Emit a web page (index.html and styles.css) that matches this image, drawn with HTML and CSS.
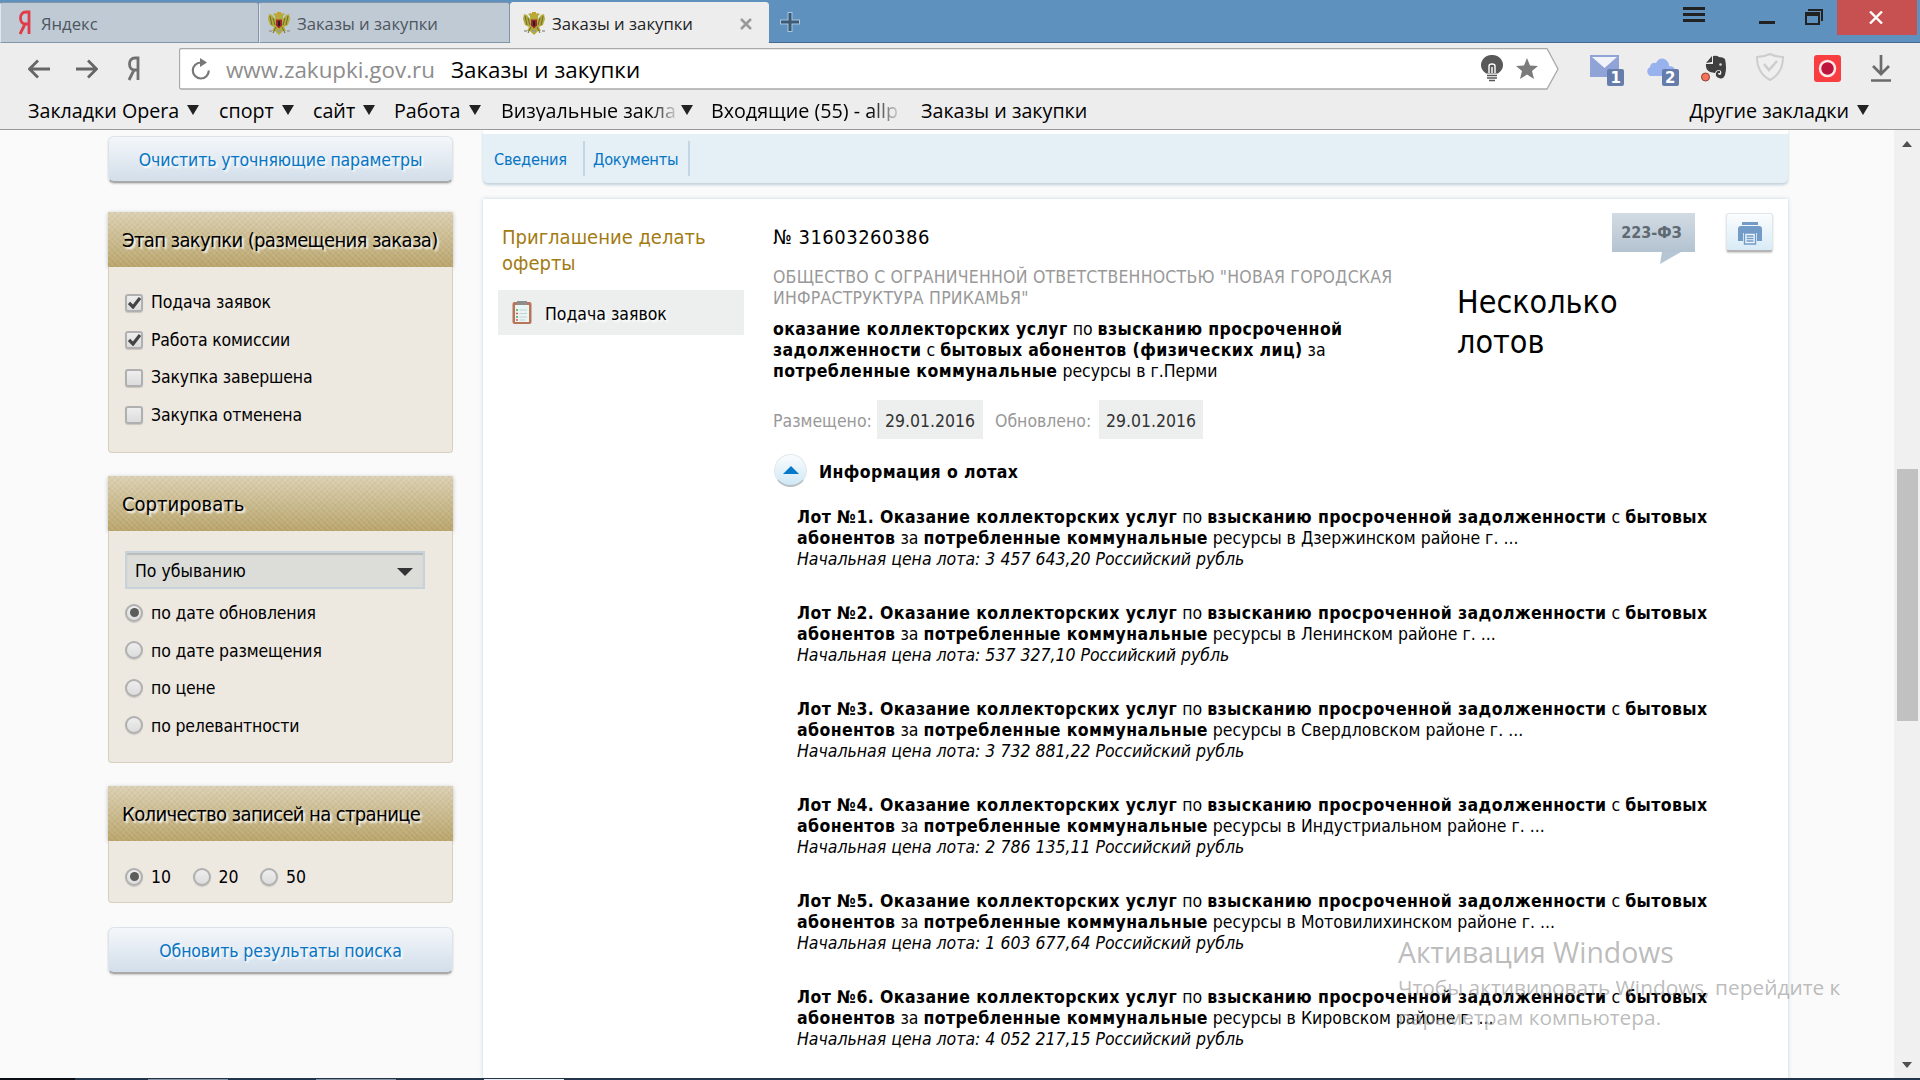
FILE: index.html
```html
<!DOCTYPE html>
<html lang="ru">
<head>
    <meta charset="UTF-8">
    <title>Заказы и закупки</title>
    <link rel="stylesheet" href="styles.css">
</head>
<body>
    <svg class="defs" width="0" height="0">
        <symbol id="eagle" viewBox="0 0 24 24">
            <path d="M11 4L9 2 6 3 8 5 8 8 5 4 2 3 1 8 3 14 7 16 5 20 8 20 11 23 12 24 13 23 16 20 19 20 17 16 21 14 23 8 22 3 19 4 16 8 16 5 18 3 15 2 13 4z" fill="#b3ac3c"/>
            <path d="M3 5l2 9M6 7l2 7M21 5l-2 9M18 7l-2 7M9 16l-3 6M15 16l3 6" stroke="#6d6a32" stroke-width="1" fill="none"/>
            <path d="M10 1h4v3h-4z" fill="#c9a02e"/>
            <path d="M9 8.500h6v6l-3 3-3-3z" fill="#a3242a"/>
            <path d="M11 10h2v5h-2z" fill="#222"/>
            <path d="M2 20h3M20 20h3M10 20h4" stroke="#999" stroke-width="1.500"/>
        </symbol>
        <symbol id="yandex" viewBox="0 0 13 25">
            <path d="M11 24V2H8C4.500 2 2.500 4.500 2.500 8s2 6 5 6H11M7 14L2 24" fill="none" stroke="currentColor" stroke-width="2.800"/>
        </symbol>
        <symbol id="badge" viewBox="0 0 34 31">
            <rect x="17" y="14" width="17" height="17" rx="2" fill="#667caa"/>
        </symbol>
    </svg>

    <div class="browser">
        <div class="tabs">
            <div class="tab tab-first">
                <svg class="ya-red" width="13" height="25"><use href="#yandex"/></svg>
                <span>Яндекс</span>
            </div>
            <div class="tab">
                <svg class="eagle" width="24" height="24"><use href="#eagle"/></svg>
                <span>Заказы и закупки</span>
            </div>
            <div class="tab active">
                <svg class="eagle" width="24" height="24"><use href="#eagle"/></svg>
                <span>Заказы и закупки</span>
                <svg class="tab-close" width="12" height="12" viewBox="0 0 12 12"><path d="M1 1l10 10M11 1L1 11" stroke="#999" stroke-width="2.500"/></svg>
            </div>
            <svg class="new-tab" width="22" height="22" viewBox="0 0 22 22"><path d="M11 1v20M1 11h20" stroke="#a9c6df" stroke-width="5"/><path d="M11 2v18M2 11h18" stroke="#3d5a75" stroke-width="3"/></svg>
            <div class="window-buttons">
                <svg class="burger" width="22" height="16" viewBox="0 0 22 16"><path d="M0 1.500h22M0 7.500h22M0 13.500h22" stroke="#222" stroke-width="3"/></svg>
                <svg class="minimize" width="16" height="3"><rect width="16" height="3" fill="#222"/></svg>
                <svg class="restore" width="18" height="16" viewBox="0 0 18 16"><path d="M3 1h14v11" fill="none" stroke="#222" stroke-width="2"/><path d="M1 5h13v10H1z" fill="none" stroke="#222" stroke-width="2"/><path d="M0 3h15v4H0z" fill="#222"/></svg>
                <div class="close">
                    <svg width="14" height="13" viewBox="0 0 14 13"><path d="M1 .5l12 12M13 .5l-12 12" stroke="#fff" stroke-width="2.400"/></svg>
                </div>
            </div>
        </div>

        <div class="toolbar">
            <svg class="arrow-back" width="22" height="20" viewBox="0 0 22 20"><path d="M22 10H2M10 1.500L1.500 10 10 18.500" fill="none" stroke="#666" stroke-width="2.800"/></svg>
            <svg class="arrow-next" width="22" height="20" viewBox="0 0 22 20"><path d="M0 10h20M12 1.500L20.500 10 12 18.500" fill="none" stroke="#666" stroke-width="2.800"/></svg>
            <svg class="ya-gray" width="13" height="25"><use href="#yandex"/></svg>
            <div class="address">
                <svg class="address-shape" width="1380" height="42" viewBox="0 0 1380 42"><path d="M2.500.5H1368L1379 21 1368 41H2.500Q.5 41 .5 39V2.500Q.5.5 2.500.5z" fill="#fff" stroke="#a9a9a9" stroke-width="1.300"/></svg>
                <svg class="reload" width="20" height="22" viewBox="0 0 20 22"><path d="M10 4.500A8 8 0 1 0 17.800 12.500" fill="none" stroke="#777" stroke-width="2.200"/><path d="M9 0l7 4.500L9 9z" fill="#777"/></svg>
                <span class="url">www.zakupki.gov.ru</span>
                <span class="page-name">Заказы и закупки</span>
                <svg class="bulb" width="22" height="27" viewBox="0 0 22 27"><path d="M11 0a10.500 10 0 0 0-6 18.500h12A10.500 10 0 0 0 11 0z" fill="#585858"/><path d="M8 18v-7q0-2 3-2t3 2v7M11 12v6" fill="none" stroke="#fff" stroke-width="1.400"/><path d="M6 20.500h10M6 23h10M8 25.500h6" stroke="#585858" stroke-width="1.500"/></svg>
                <svg class="star" width="22" height="21" viewBox="0 0 22 21"><path d="M11 0l3 7.500 8 .5-6 5 2 8-7-4.500L4 21l2-8-6-5 8-.5z" fill="#7b7b7b"/></svg>
            </div>
            <div class="extensions">
                <svg class="mail" width="34" height="31" viewBox="0 0 34 31"><path d="M0 0h29v22H0z" fill="#8fa3d6"/><path d="M2 2h25L14.500 13z" fill="#f1f3fa"/><use href="#badge"/><text class="badge-text" x="20.500" y="28">1</text></svg>
                <svg class="cloud" width="34" height="31" viewBox="0 0 34 31"><path d="M5 21a5 5 0 0 1 0-9Q6 7 11 8 15 1 21 5q3 2 3 6 7 0 6 7l-2 3z" fill="#98b2ed"/><use href="#badge"/><text class="badge-text" x="20" y="28">2</text></svg>
                <svg class="evernote" width="26" height="27" viewBox="0 0 26 27"><path d="M5 8l6-7v6zM12 1q4-1 6 1 4 0 6 2 2 9 0 16-2 5-6 3-4-1-3-5 1-3 4-2v2h-2q0 2 2 2 2-1 1-4-2-2-5 0l-1 2-5-1Q4 14 5 9h7z" fill="#3f3f3f"/><circle cx="19.500" cy="9.500" r="1.300" fill="#ddd"/><circle cx="4.500" cy="22" r="4" fill="#f4745a" stroke="#8d4036"/></svg>
                <svg class="shield" width="28" height="28" viewBox="0 0 28 28"><path d="M14 1q6 3 13 3 0 16-13 23Q1 20 1 4q7 0 13-3z" fill="#efefef" stroke="#cdcdcd" stroke-width="2"/><path d="M8 11l5 6 8-9" fill="none" stroke="#cdcdcd" stroke-width="2.500"/></svg>
                <svg class="record" width="27" height="27" viewBox="0 0 27 27"><rect width="27" height="27" rx="3" fill="#f93e42"/><circle cx="13.500" cy="13.500" r="7.500" fill="#bd153b" stroke="#ffe9e9" stroke-width="2.500"/></svg>
                <svg class="download" width="20" height="27" viewBox="0 0 20 27"><path d="M10 0v19M2 11l8 8 8-8M0 25.500h20" fill="none" stroke="#6b6b6b" stroke-width="2.700"/></svg>
            </div>
        </div>

        <div class="bookmarks">
            <div class="bm bm-opera"><span>Закладки Opera</span><i></i></div>
            <div class="bm bm-sport"><span>спорт</span><i></i></div>
            <div class="bm bm-site"><span>сайт</span><i></i></div>
            <div class="bm bm-work"><span>Работа</span><i></i></div>
            <div class="bm bm-visual"><span class="fade">Визуальные закла</span><i></i></div>
            <div class="bm bm-inbox"><span class="fade">Входящие (55) - allp</span></div>
            <div class="bm bm-orders"><span>Заказы и закупки</span></div>
            <div class="bm bm-other"><span>Другие закладки</span><i></i></div>
        </div>
    </div>

    <div class="page">
        <aside>
            <button class="btn btn-clear">Очистить уточняющие параметры</button>

            <section class="panel stage">
                <h3>Этап закупки (размещения заказа)</h3>
                <div class="panel-body">
                    <label><span class="check on"><svg width="13" height="12" viewBox="0 0 13 12"><path d="M1 6l4 4 7-9" fill="none" stroke="#444" stroke-width="3.200"/></svg></span>Подача заявок</label>
                    <label><span class="check on"><svg width="13" height="12" viewBox="0 0 13 12"><path d="M1 6l4 4 7-9" fill="none" stroke="#444" stroke-width="3.200"/></svg></span>Работа комиссии</label>
                    <label><span class="check"></span>Закупка завершена</label>
                    <label><span class="check"></span>Закупка отменена</label>
                </div>
            </section>

            <section class="panel sort">
                <h3>Сортировать</h3>
                <div class="panel-body">
                    <div class="select"><span>По убыванию</span><svg width="16" height="8" viewBox="0 0 16 8"><path d="M0 0h16L8 8z" fill="#333"/></svg></div>
                    <label><span class="radio on"></span>по дате обновления</label>
                    <label><span class="radio"></span>по дате размещения</label>
                    <label><span class="radio"></span>по цене</label>
                    <label><span class="radio"></span>по релевантности</label>
                </div>
            </section>

            <section class="panel count">
                <h3>Количество записей на странице</h3>
                <div class="panel-body">
                    <label><span class="radio on"></span>10</label>
                    <label><span class="radio"></span>20</label>
                    <label><span class="radio"></span>50</label>
                </div>
            </section>

            <button class="btn btn-update">Обновить результаты поиска</button>
        </aside>

        <main>
            <nav>
                <a>Сведения</a>
                <a>Документы</a>
            </nav>

            <article>
                <div class="status">
                    <h2>Приглашение делать<br>оферты</h2>
                    <div class="status-step">
                        <svg width="22" height="25" viewBox="0 0 22 25"><rect x="1.500" y="2" width="19" height="22" rx="2" fill="#b9755a"/><rect x="4" y="5" width="14" height="17" fill="#e9f5f3"/><path d="M6 1h10v4H6z" fill="#8d8d8d"/><path d="M5 10h2M5 17h2" stroke="#4ea64e" stroke-width="1.500"/><path d="M5 13.500h2M5 20h2" stroke="#c95c5c" stroke-width="1.500"/><path d="M8.500 10H16M8.500 13.500H16M8.500 17H16M8.500 20H14" stroke="#c2d2d6"/></svg>
                        <span>Подача заявок</span>
                    </div>
                </div>

                <div class="info">
                    <div class="info-top">
                        <div class="order">
                            <p class="number">№ 31603260386</p>
                            <p class="company">ОБЩЕСТВО С ОГРАНИЧЕННОЙ ОТВЕТСТВЕННОСТЬЮ "НОВАЯ ГОРОДСКАЯ<br>ИНФРАСТРУКТУРА ПРИКАМЬЯ"</p>
                            <p class="desc"><b>оказание коллекторских услуг</b> по <b>взысканию просроченной</b><br><b>задолженности</b> с <b>бытовых абонентов (физических лиц)</b> за<br><b>потребленные коммунальные</b> ресурсы в г.Перми</p>
                            <div class="dates">
                                <span>Размещено:</span><em>29.01.2016</em>
                                <span>Обновлено:</span><em>29.01.2016</em>
                            </div>
                        </div>
                        <div class="side">
                            <div class="side-icons">
                                <div class="law">223-ФЗ<svg width="22" height="12" viewBox="0 0 22 12"><path d="M2 0h19L0 12z" fill="#b6c5d3"/></svg></div>
                                <div class="print"><svg width="24" height="23" viewBox="0 0 24 23"><path d="M4 0h16v3H4z" fill="#739bc7"/><path d="M3 4h18q3 0 3 3v12h-5v-8H5v8H0V7q0-3 3-3z" fill="#739bc7"/><path d="M6.500 11h11v11h-11z" fill="#eef6fb" stroke="#739bc7" stroke-width="1.400"/><path d="M8.500 14h7M8.500 16.500h7M8.500 19h7" stroke="#739bc7" stroke-width="1.300"/></svg></div>
                            </div>
                            <p class="many">Несколько<br>лотов</p>
                        </div>
                    </div>

                    <div class="lots-title">
                        <div class="toggle"><svg width="16" height="8" viewBox="0 0 16 8"><path d="M0 8h16L8 0z" fill="#0678c9"/></svg></div>
                        <b>Информация о лотах</b>
                    </div>

                    <div class="lots">
                        <p><b>Лот №1. Оказание коллекторских услуг</b> по <b>взысканию просроченной задолженности</b> с <b>бытовых</b><br><b>абонентов</b> за <b>потребленные коммунальные</b> ресурсы в Дзержинском районе г. ...<br><i>Начальная цена лота: 3 457 643,20 Российский рубль</i></p>
                        <p><b>Лот №2. Оказание коллекторских услуг</b> по <b>взысканию просроченной задолженности</b> с <b>бытовых</b><br><b>абонентов</b> за <b>потребленные коммунальные</b> ресурсы в Ленинском районе г. ...<br><i>Начальная цена лота: 537 327,10 Российский рубль</i></p>
                        <p><b>Лот №3. Оказание коллекторских услуг</b> по <b>взысканию просроченной задолженности</b> с <b>бытовых</b><br><b>абонентов</b> за <b>потребленные коммунальные</b> ресурсы в Свердловском районе г. ...<br><i>Начальная цена лота: 3 732 881,22 Российский рубль</i></p>
                        <p><b>Лот №4. Оказание коллекторских услуг</b> по <b>взысканию просроченной задолженности</b> с <b>бытовых</b><br><b>абонентов</b> за <b>потребленные коммунальные</b> ресурсы в Индустриальном районе г. ...<br><i>Начальная цена лота: 2 786 135,11 Российский рубль</i></p>
                        <p><b>Лот №5. Оказание коллекторских услуг</b> по <b>взысканию просроченной задолженности</b> с <b>бытовых</b><br><b>абонентов</b> за <b>потребленные коммунальные</b> ресурсы в Мотовилихинском районе г. ...<br><i>Начальная цена лота: 1 603 677,64 Российский рубль</i></p>
                        <p><b>Лот №6. Оказание коллекторских услуг</b> по <b>взысканию просроченной задолженности</b> с <b>бытовых</b><br><b>абонентов</b> за <b>потребленные коммунальные</b> ресурсы в Кировском районе г. ...<br><i>Начальная цена лота: 4 052 217,15 Российский рубль</i></p>
                    </div>
                </div>
            </article>
        </main>

        <div class="scrollbar">
            <svg width="10" height="6" viewBox="0 0 10 6"><path d="M0 6h10L5 0z" fill="#505050"/></svg>
            <div class="thumb"></div>
            <svg width="10" height="6" viewBox="0 0 10 6"><path d="M0 0h10L5 6z" fill="#505050"/></svg>
        </div>
    </div>

    <div class="taskbar"><i></i><i></i><i class="current"></i></div>

    <div class="watermark">
        <h4>Активация Windows</h4>
        <p>Чтобы активировать Windows, перейдите к<br>параметрам компьютера.</p>
    </div>
</body>
</html>
```
FILE: styles.css
```css
*{
    box-sizing: border-box;
}

html body{
    margin: 0;
    width: 1920px;
    height: 1080px;
    overflow: hidden;
    display: flex;
    flex-direction: column;
    background-color: #fafafa;
    font-family: "DejaVu Sans Condensed", "DejaVu Sans", sans-serif;
    font-stretch: condensed;
    font-size: 17.5px;
    line-height: 21px;
    color: #000;
    white-space: nowrap;
}

p, h2, h3, h4{
    margin: 0;
    font-weight: normal;
}

b{
    letter-spacing: 0.4px;
}

svg{
    flex: none;
    display: block;
}

.defs{
    position: absolute;
}

/* browser */
.browser{
    height: 130px;
    background-color: #ededed;
    border-bottom: 1px solid #999;
    font-family: "Open Sans", "Noto Sans", sans-serif;
    font-stretch: normal;
}

.tabs{
    height: 43px;
    display: flex;
    background-color: #5f91bf;
    border-bottom: 1px solid #47688f;
}

.tab{
    width: 251px;
    height: 41px;
    margin-top: 2px;
    padding-left: 7px;
    display: flex;
    align-items: center;
    background-color: #c0cad5;
    border: 1px solid #8295a9;
    border-left-color: #e0e6ec;
    border-radius: 3px 3px 0 0;
    font-size: 16.7px;
    color: #4d565f;
}

.tab span{
    padding-top: 2px;
}

.tab-first{
    width: 259px;
    padding-left: 17px;
}

.tab-first span{
    margin-left: 10px;
}

.ya-red{
    color: #e03c48;
}

.eagle{
    margin-right: 6px;
}

.tab.active{
    width: 259px;
    padding-left: 11px;
    background-color: #ededed;
    border-color: #ededed;
    color: #222;
}

.tab-close{
    margin-left: auto;
    margin-right: 16px;
    margin-top: 2px;
}

.new-tab{
    margin: 11px 0 0 10px;
}

.window-buttons{
    display: flex;
    margin-left: auto;
    margin-right: 3px;
}

.burger{
    margin: 7px 54px 0 0;
}

.minimize{
    margin: 21px 30px 0 0;
}

.restore{
    margin: 9px 14px 0 0;
}

.close{
    width: 80px;
    height: 35px;
    padding-right: 3px;
    display: flex;
    align-items: center;
    justify-content: center;
    background-color: #c75050;
}

.toolbar{
    height: 47px;
    display: flex;
    align-items: center;
    padding: 4px 29px 0 28px;
}

.arrow-next{
    margin-left: 26px;
}

.ya-gray{
    margin: 0 39px 0 29px;
    color: #707070;
}

.address{
    position: relative;
    width: 1380px;
    height: 42px;
    padding: 0 20px 0 12px;
    display: flex;
    align-items: center;
    font-size: 22.4px;
}

.address-shape{
    position: absolute;
    left: 0;
    top: 0;
}

.address > :not(.address-shape){
    position: relative;
}

.address span{
    padding-top: 2px;
}

.url{
    margin-left: 15px;
    width: 225px;
    color: #8d8d8d;
}

.bulb{
    margin-left: auto;
    margin-right: 13px;
}

.star{
    margin-right: 1px;
}

.extensions{
    display: flex;
    align-items: center;
    margin-left: 31px;
}

.mail{
    margin-top: 3px;
    margin-right: 21px;
}

.cloud{
    margin-top: 3px;
    margin-right: 22px;
}

.evernote{
    margin-right: 29px;
}

.shield{
    margin-top: -3px;
    margin-right: 30px;
}

.record{
    margin-right: 30px;
}

.badge-text{
    font: bold 15px "DejaVu Sans", sans-serif;
    fill: #fff;
}

.bookmarks{
    height: 39px;
    display: flex;
    align-items: center;
    padding: 1px 0 0 28px;
    font-size: 19.7px;
}

.bm{
    display: flex;
    align-items: center;
}

.bm i{
    margin-left: 8px;
    border: 6px solid transparent;
    border-top: 10px solid #222;
    border-bottom: 0;
}

.bm-opera{ width: 191px; }
.bm-sport{ width: 94px; }
.bm-site{ width: 81px; }
.bm-work{ width: 107px; }
.bm-visual{ width: 210px; }
.bm-inbox{ width: 210px; }

.bm-visual i{
    margin-left: 5px;
}

.bm-other{
    margin-left: auto;
    margin-right: 51px;
}

.fade{
    background: linear-gradient(90deg, #000 85%, #ccc);
    background-clip: text;
    -webkit-background-clip: text;
    color: transparent;
}

/* page */
.page{
    height: 948px;
    display: flex;
    overflow: hidden;
}

aside{
    width: 345px;
    margin: 6px 30px 0 108px;
}

.btn{
    display: block;
    width: 345px;
    height: 47px;
    padding: 2px 0 0;
    border: 1px solid #dde3e8;
    border-bottom: 2px solid #a9a9a9;
    border-radius: 6px;
    background: linear-gradient(#f4f7fa, #d2deea);
    box-shadow: 0 1px 2px rgba(0, 0, 0, 0.2);
    font: inherit;
    font-size: 17.5px;
    letter-spacing: -0.1px;
    color: #0675c4;
    text-shadow: 2px 2px 2px #fff;
}

.panel{
    margin-top: 23px;
}

.stage{
    margin-top: 29px;
}

.panel h3{
    height: 55px;
    padding-left: 14px;
    line-height: 57px;
    font-size: 20px;
    background:
        repeating-linear-gradient(45deg, rgba(255, 255, 255, 0.08) 0 2px, transparent 2px 4px),
        repeating-linear-gradient(-45deg, rgba(120, 90, 20, 0.05) 0 2px, transparent 2px 4px),
        linear-gradient(#dbd0b3, #b8a46a);
    box-shadow: 0 1px 4px rgba(0, 0, 0, 0.25);
    text-shadow: 2px 2px 2px #fff;
}

.stage h3, .count h3{
    letter-spacing: -0.62px;
}

.panel-body{
    position: relative;
    border: 1px solid #d6cfbd;
    border-top: 0;
    border-radius: 0 0 4px 4px;
    background-color: #ede8e0;
    padding-left: 16px;
}

.stage .panel-body{
    height: 186px;
    padding-top: 17px;
}

.sort .panel-body{
    height: 232px;
    padding-top: 20px;
}

.count .panel-body{
    height: 62px;
    padding-top: 17px;
    display: flex;
}

.panel label{
    display: flex;
    align-items: center;
    height: 37.5px;
    letter-spacing: -0.15px;
}

.sort label, .count label{
    padding-top: 2px;
}

.count label{
    width: 67.5px;
    letter-spacing: 0;
}

.check, .radio{
    width: 18px;
    height: 18px;
    margin-right: 8px;
    border: 2px solid #b0b0b0;
    border-radius: 3px;
    background: linear-gradient(#eee, #dcdcdc);
    box-shadow: 0 1px 1px rgba(0, 0, 0, 0.15);
    display: flex;
    align-items: center;
    justify-content: center;
}

.radio{
    margin-top: -2px;
    border-radius: 50%;
}

.radio.on::before{
    content: "";
    width: 9px;
    height: 9px;
    border-radius: 50%;
    background-color: #5c5c5c;
}

.select{
    width: 300px;
    height: 38px;
    margin-bottom: 5px;
    padding: 2px 10px 0 8px;
    border: 2px solid #c6d3da;
    background-color: #dcddd8;
    box-shadow: inset 0 2px 1px #bbb;
    display: flex;
    align-items: center;
    justify-content: space-between;
}

.select svg{
    margin-top: 2px;
}

.btn-update{
    margin-top: 24px;
}

main{
    width: 1305px;
}

nav{
    height: 53px;
    border-top: 4px solid #fff;
    border-radius: 0 0 5px 5px;
    background-color: #e4eff6;
    box-shadow: 0 2px 3px #bfd0da;
    display: flex;
    align-items: center;
    font-size: 16.25px;
    letter-spacing: -0.25px;
    color: #0675c4;
}

nav a{
    height: 35px;
    line-height: 38px;
    border-right: 2px solid #c3d6e4;
}

nav a:first-child{
    width: 102px;
    padding-left: 11px;
}

nav a:last-child{
    width: 105px;
    padding-left: 8px;
}

article{
    margin-top: 16px;
    height: 900px;
    display: flex;
    background-color: #fff;
    box-shadow: 0 0 4px #bfd3dc;
}

.status{
    width: 290px;
    padding: 25px 0 0 15px;
}

.status h2{
    padding-left: 4px;
    font-size: 20px;
    line-height: 26px;
    color: #a37b13;
}

.status-step{
    width: 246px;
    height: 45px;
    margin-top: 14px;
    padding-left: 13px;
    display: flex;
    align-items: center;
    background-color: #edefee;
}

.status-step span{
    margin-left: 12px;
    padding-top: 3px;
    text-shadow: 2px 2px 2px #fff;
}

.info-top{
    display: flex;
}

.order{
    width: 684px;
    padding-top: 25px;
}

.number{
    font-size: 20px;
    line-height: 26px;
    letter-spacing: 0.5px;
}

.company{
    margin-top: 17px;
    letter-spacing: 0.22px;
    color: #999;
}

.desc{
    margin-top: 10px;
}

.dates{
    height: 39px;
    margin-top: 18px;
    display: flex;
    align-items: center;
    color: #999;
}

.dates span{
    width: 104px;
    padding-top: 3px;
}

.dates em{
    width: 106px;
    height: 39px;
    line-height: 42px;
    padding-left: 8px;
    margin-right: 12px;
    font-style: normal;
    background-color: #edefee;
    color: #333;
}

.dates em:last-child{
    width: 104px;
    padding-left: 7px;
}

.side-icons{
    display: flex;
    margin: 14px 0 0 155px;
}

.law{
    position: relative;
    width: 83px;
    height: 39px;
    margin-right: 31px;
    padding-right: 4px;
    line-height: 39px;
    text-align: center;
    font-weight: bold;
    font-size: 16px;
    color: #5f6971;
    background: linear-gradient(#d2dbe3, #b4c3d1);
}

.law svg{
    position: absolute;
    left: 48px;
    top: 39px;
}

.print{
    width: 47px;
    height: 39px;
    padding-top: 3px;
    border: 1px solid #e0e6ea;
    border-bottom: 2px solid #b5b5b5;
    border-radius: 3px;
    background: linear-gradient(#fbfdfe, #d8ebf6);
    box-shadow: 0 1px 2px rgba(0, 0, 0, 0.2);
    display: flex;
    align-items: center;
    justify-content: center;
}

.many{
    margin-top: 30px;
    font-size: 32px;
    line-height: 40px;
}

.lots-title{
    display: flex;
    align-items: center;
    height: 34px;
    margin-top: 14px;
}

.lots-title b{
    padding-top: 5px;
}

.toggle{
    width: 33px;
    height: 33px;
    margin-left: 1px;
    margin-right: 12px;
    border: 1px solid #e3e8ea;
    border-bottom: 2px solid #b9c0c4;
    border-radius: 50%;
    background: linear-gradient(#fafcfd, #cfe8f6);
    display: flex;
    align-items: center;
    justify-content: center;
}

.lots{
    padding: 20px 0 0 24px;
}

.lots p{
    height: 96px;
}

.scrollbar{
    width: 26px;
    height: 948px;
    margin-left: auto;
    padding: 11px 0 10px;
    display: flex;
    flex-direction: column;
    justify-content: space-between;
    align-items: center;
    background-color: #f0f0f0;
}

.thumb{
    width: 21px;
    height: 252px;
    margin-bottom: 19px;
    background-color: #c1c1c1;
}

.taskbar{
    height: 2px;
    padding-left: 148px;
    display: flex;
    gap: 88px;
    background: linear-gradient(90deg, #0b0f15 75px, #22354a 75px);
}

.taskbar i{
    width: 80px;
    height: 1px;
    margin-top: 1px;
    background-color: #8694a3;
}

.taskbar .current{
    background-color: #e9eef3;
}

/* activation notice over the page */
.watermark{
    position: absolute;
    left: 1398px;
    top: 932px;
    font-family: "Open Sans", "Noto Sans", sans-serif;
    font-stretch: normal;
    color: rgba(150, 150, 150, 0.65);
}

.watermark h4{
    font-size: 28.4px;
    line-height: 40px;
}

.watermark p{
    font-size: 20.85px;
    line-height: 30px;
}
```
